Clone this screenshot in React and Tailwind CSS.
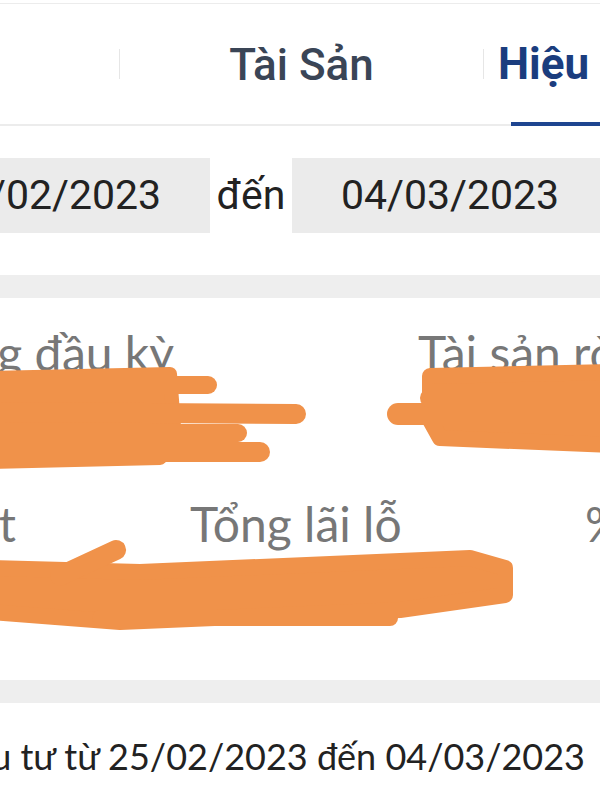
import React from 'react';

const ORANGE = '#f0924a';

const Scribbles = () => (
  <svg
    className="absolute left-0 top-0 pointer-events-none"
    width="600"
    height="800"
    viewBox="0 0 600 800"
  >
    <g stroke={ORANGE} strokeLinecap="round" strokeLinejoin="round" fill={ORANGE}>
      {/* left, first row */}
      <path d="M-10 378 L170 374 L172 400 L175 440 L160 458 L-10 462 Z" strokeWidth="14" />
      <path d="M0 385 L208 385" strokeWidth="18" fill="none" />
      <path d="M0 412 L296 414" strokeWidth="20" fill="none" />
      <path d="M0 433 L238 433" strokeWidth="18" fill="none" />
      <path d="M0 452 L260 452" strokeWidth="20" fill="none" />
      {/* right, first row */}
      <path d="M430 376 L610 372 L610 445 L440 438 L430 420 Z" strokeWidth="16" />
      <path d="M398 414 L600 414" strokeWidth="22" fill="none" />
      <path d="M430 398 L600 398" strokeWidth="20" fill="none" />
      {/* second row */}
      <path d="M-10 568 L140 572 L470 558 L505 568 L505 595 L400 610 L120 622 L-10 612 Z" strokeWidth="16" />
      <path d="M60 576 L116 550" strokeWidth="20" fill="none" />
      <path d="M100 618 L390 618" strokeWidth="16" fill="none" />
    </g>
  </svg>
);

const Sep = () => <div className="shrink-0 w-px h-[30px] bg-[#e6e6e6]" />;

export default function App() {
  return (
    <div className="relative w-[600px] h-[800px] overflow-hidden bg-white font-['Lato',sans-serif]">
      {/* tabs */}
      <div className="h-[3px] bg-white" />
      <div className="h-px bg-[#ececec]" />
      <div className="relative flex items-center h-[122px] border-b-2 border-[#ececec] whitespace-nowrap font-['Roboto',sans-serif]">
        <div className="shrink-0 w-[119px]" />
        <Sep />
        <div className="shrink-0 w-[363px] flex justify-center pt-[2px] text-[44px] text-[#3a4556] font-medium">
          Tài Sản
        </div>
        <Sep />
        <div className="shrink-0 w-[200px] h-full flex flex-col">
          <div className="flex-1 flex items-center pl-[14px] pt-[2px] text-[44px] font-bold text-[#1b3d7e]">
            Hiệu quả
          </div>
          <div className="ml-[27px] h-[4px] bg-[#1e4590] -mb-[2px]" />
        </div>
      </div>

      {/* date range */}
      <div className="flex items-center mt-[32px] h-[75px] font-['Roboto',sans-serif] text-[41px] text-[#222]">
        <div className="shrink-0 w-[316px] ml-[-106px] h-full bg-[#ebebeb] flex items-center justify-center">
          25/02/2023
        </div>
        <div className="w-[82px] shrink-0 flex justify-center">đến</div>
        <div className="shrink-0 w-[316px] h-full bg-[#ebebeb] flex items-center justify-center">
          04/03/2023
        </div>
      </div>

      <div className="mt-[42px] h-[23px] bg-[#eeeeee]" />

      {/* summary card */}
      <div className="h-[382px] text-[48px] leading-[56px] text-[#777] whitespace-nowrap">
        <div className="flex pt-[27px] h-[198px]">
          <div className="w-[174px] shrink-0 flex justify-end">Tài sản ròng đầu kỳ</div>
          <div className="ml-[244px] shrink-0">Tài sản ròng</div>
        </div>
        <div className="flex">
          <div className="w-[16px] shrink-0 flex justify-end">Tiền mặt</div>
          <div className="ml-[174px] shrink-0 w-[395px]">Tổng lãi lỗ</div>
          <div className="shrink-0">% lãi lỗ</div>
        </div>
      </div>

      <div className="h-[23px] bg-[#eeeeee]" />

      {/* footer note */}
      <div className="flex justify-end pr-[15px] pt-[26px] text-[36px] text-[#222] whitespace-nowrap">
        <span className="shrink-0">Hiệu quả đầu tư từ 25/02/2023 đến 04/03/2023</span>
      </div>

      <Scribbles />
    </div>
  );
}
